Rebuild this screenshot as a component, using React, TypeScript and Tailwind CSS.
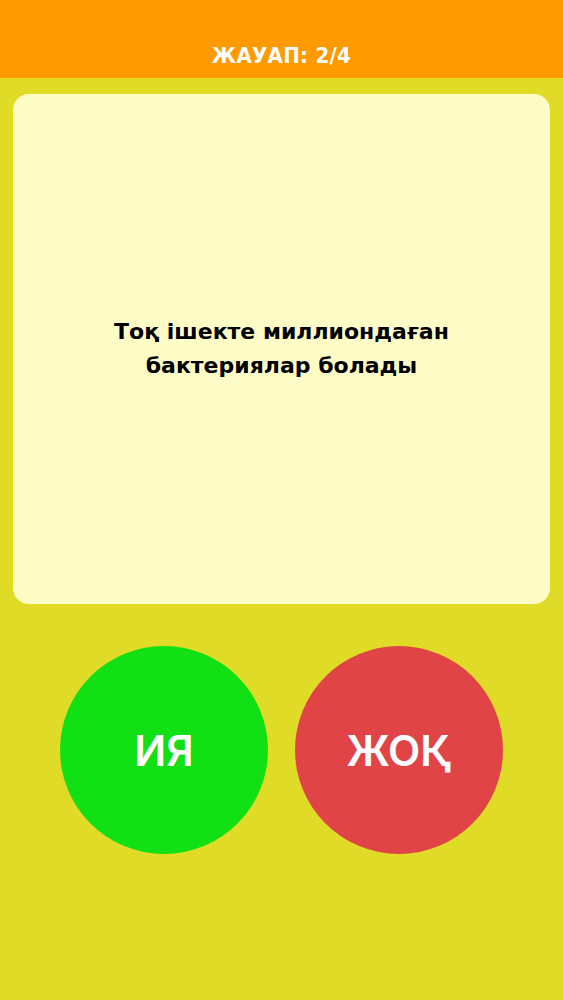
export default function App() {
  return (
    <div className="min-h-screen w-full bg-[#e0db27] flex flex-col" style={{ fontFamily: 'Inter, "Noto Sans", sans-serif' }}>
      <header className="h-[78px] bg-[#ff9a00] flex items-end justify-center pb-[7px]">
        <h1 className="text-white font-bold text-[22px] tracking-[0.3px] leading-[30px]" style={{ fontFamily: '"DejaVu Sans Condensed", "DejaVu Sans", sans-serif' }}>
          ЖАУАП: 2/4
        </h1>
      </header>
      <main className="flex flex-col px-[13px] pt-[16px]">
        <div className="h-[510px] rounded-[16px] bg-[#fefcc6] flex items-center justify-center px-6">
          <p className="text-center text-black font-bold text-[22px] leading-[34px]" style={{ fontFamily: '"DejaVu Sans", sans-serif' }}>
            Тоқ ішекте миллиондаған
            <br />
            бактериялар болады
          </p>
        </div>
        <div className="flex justify-center gap-[27px] mt-[42px]">
          <button className="w-[208px] h-[208px] rounded-full bg-[#10e014] flex items-center justify-center text-white font-semibold text-[42px]">
            ИЯ
          </button>
          <button className="w-[208px] h-[208px] rounded-full bg-[#e04446] flex items-center justify-center text-white font-semibold text-[42px]">
            ЖОҚ
          </button>
        </div>
      </main>
    </div>
  );
}
